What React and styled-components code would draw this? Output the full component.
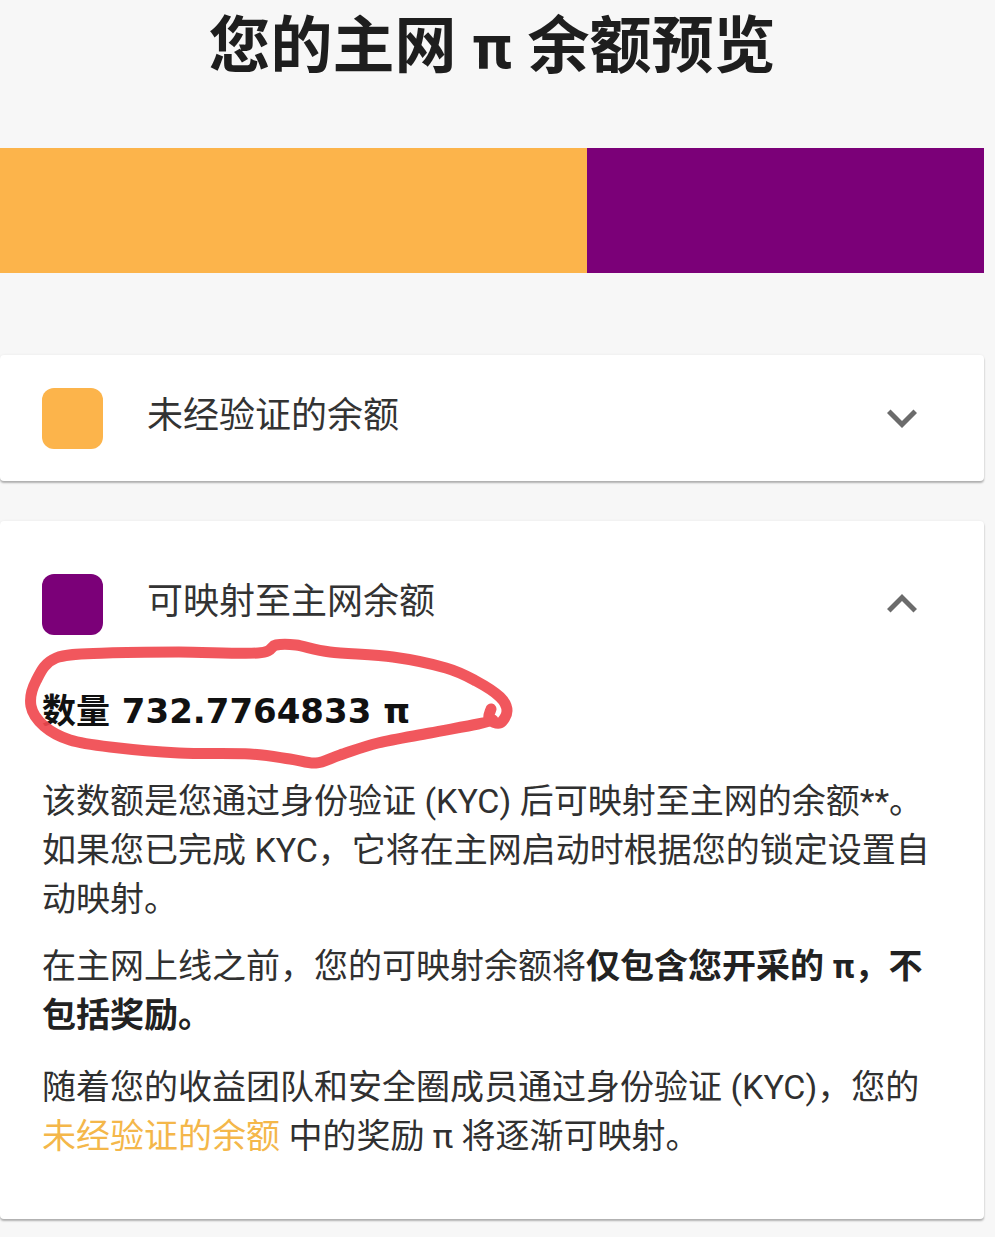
import styled, { createGlobalStyle } from "styled-components";

// ------- STYLES ---------
const GlobalStyle = createGlobalStyle`
body{
  margin: 0;
  background-color: #f7f7f7;
  font-family: Roboto, "Noto Sans CJK SC", sans-serif;
}
`
const Page = styled.div`
width: 984px;
padding-top: 10px;
padding-bottom: 20px;
`
const Title = styled.h1`
margin: 0;
text-align: center;
font-family: Roboto, "Noto Sans CJK SC", sans-serif;
font-size: 62px;
line-height: 74px;
font-weight: 700;
color: #1e1e1e;
`
const Bar = styled.div`
display: flex;
height: 125px;
margin-top: 64px;
`
const BarPart = styled.div`
background-color: ${p => p.$color};
flex: ${p => p.$grow} 1 0;
`
const Card = styled.section`
position: relative;
margin-top: ${p => p.$top}px;
background-color: #fff;
border-radius: 4px;
box-shadow: 0 2px 2px rgba(0, 0, 0, 0.28), 0 0 3px rgba(0, 0, 0, 0.06);
padding: ${p => p.$pad};
`
const HeaderRow = styled.div`
display: flex;
align-items: center;
height: 62px;
`
const Swatch = styled.div`
width: 61px;
height: 61px;
border-radius: 12px;
background-color: ${p => p.$color};
flex-shrink: 0;
`
const Label = styled.div`
margin-left: 44px;
padding-bottom: 12px;
font-size: 36px;
color: #333;
flex: 1;
`
const Chevron = styled.svg`
width: 60px;
height: 60px;
margin-right: 10px;
fill: #6b6b6b;
`
const Amount = styled.div`
position: relative;
margin-top: 52px;
font-family: "DejaVu Sans", "Noto Sans CJK SC", sans-serif;
font-size: 34px;
line-height: 48px;
font-weight: 700;
color: #111;
`
const Para = styled.p`
margin: ${p => p.$top}px 0 0;
font-size: 34px;
line-height: 49px;
color: #303030;

b{
  font-weight: 700;
  color: #222;
}
`
const Link = styled.span`
color: #f4b74a;
`
const Scribble = styled.svg`
position: absolute;
left: 0;
top: 0;
width: 984px;
height: 300px;
pointer-events: none;
`

// hand drawn red circle round the amount, points in card space
const scribblePoints = [
  [491, 188], [489, 198], [500, 202], [507, 190], [500, 176], [476, 160],
  [446, 147], [393, 136], [330, 131], [296, 124], [276, 124], [258, 132],
  [179, 131], [107, 132], [56, 137], [36, 160], [31, 185], [44, 205],
  [70, 219], [110, 226], [179, 232], [250, 233], [290, 238], [316, 242],
  [340, 234], [378, 222], [430, 212], [478, 203], [493, 199],
]

const smoothPath = (pts) => {
  let d = `M ${pts[0][0]} ${pts[0][1]}`
  for (let i = 0; i < pts.length - 1; i++) {
    const p0 = pts[i - 1] || pts[i]
    const p1 = pts[i]
    const p2 = pts[i + 1]
    const p3 = pts[i + 2] || p2
    const c1x = p1[0] + (p2[0] - p0[0]) / 6
    const c1y = p1[1] + (p2[1] - p0[1]) / 6
    const c2x = p2[0] - (p3[0] - p1[0]) / 6
    const c2y = p2[1] - (p3[1] - p1[1]) / 6
    d += ` C ${c1x} ${c1y} ${c2x} ${c2y} ${p2[0]} ${p2[1]}`
  }
  return d
}

// -------------------------

const ORANGE = "#fcb44b"
const PURPLE = "#7b0078"

function ChevronIcon({ up }) {
  return (
    <Chevron viewBox="0 0 24 24">
      {up
        ? <path d="M12 8l-6 6 1.41 1.41L12 10.83l4.59 4.58L18 14z" />
        : <path d="M16.59 8.59L12 13.17 7.41 8.59 6 10l6 6 6-6z" />}
    </Chevron>
  )
}

export default function App() {
  return (
    <Page>
      <GlobalStyle />
      <Title>您的主网 π 余额预览</Title>

      <Bar>
        <BarPart $color={ORANGE} $grow={587} />
        <BarPart $color={PURPLE} $grow={397} />
      </Bar>

      <Card $top={82} $pad="32px 42px">
        <HeaderRow>
          <Swatch $color={ORANGE} />
          <Label>未经验证的余额</Label>
          <ChevronIcon />
        </HeaderRow>
      </Card>

      <Card $top={40} $pad="52px 42px 58px">
        <HeaderRow>
          <Swatch $color={PURPLE} />
          <Label>可映射至主网余额</Label>
          <ChevronIcon up />
        </HeaderRow>

        <Amount>数量 732.7764833 π</Amount>

        <Para $top={42}>
          该数额是您通过身份验证 (KYC) 后可映射至主网的余额**。如果您已完成 KYC，它将在主网启动时根据您的锁定设置自动映射。
        </Para>
        <Para $top={18}>
          在主网上线之前，您的可映射余额将<b>仅包含您开采的 π，不包括奖励。</b>
        </Para>
        <Para $top={23}>
          随着您的收益团队和安全圈成员通过身份验证 (KYC)，您的 <Link>未经验证的余额</Link> 中的奖励 π 将逐渐可映射。
        </Para>

        <Scribble viewBox="0 0 984 300">
          <path
            d={smoothPath(scribblePoints)}
            fill="none"
            stroke="#f0494f"
            strokeWidth="11"
            strokeLinecap="round"
            strokeLinejoin="round"
            opacity="0.92"
          />
        </Scribble>
      </Card>
    </Page>
  )
}
